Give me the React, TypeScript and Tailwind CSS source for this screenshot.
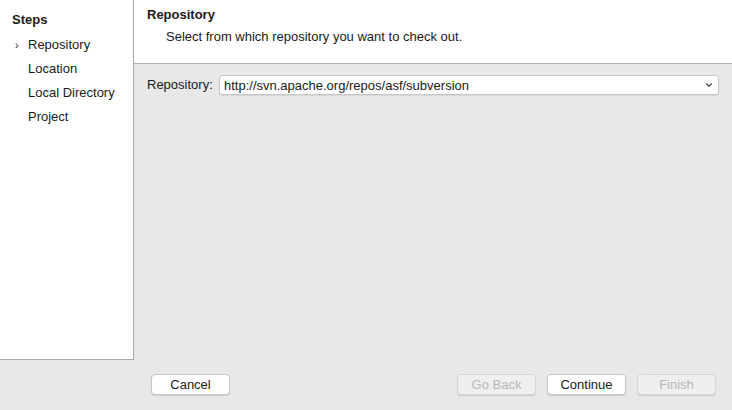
import { ChevronDown } from 'lucide-react';

const steps = ['Repository', 'Location', 'Local Directory', 'Project'];

function Button({ label, disabled }: { label: string; disabled?: boolean }) {
  return (
    <button
      type="button"
      disabled={disabled}
      className={`w-[79px] h-[21px] rounded-[4px] border text-[13px] leading-none shadow-[0_1px_1px_rgba(0,0,0,0.12)] ${
        disabled ? 'bg-[#efefef] border-[#d6d6d6] text-[#b8b8b8]' : 'bg-white border-[#c6c6c6] text-[#1a1a1a]'
      }`}
    >
      {label}
    </button>
  );
}

export default function App() {
  return (
    <div className="w-[732px] h-[410px] bg-[#e8e8e8] flex flex-col overflow-hidden text-[#1a1a1a] font-['Liberation_Sans',Arial,sans-serif] text-[13px]">
      <div className="flex h-[360px]">
        {/* Steps sidebar */}
        <div className="w-[134px] shrink-0 bg-white border-r border-b border-[#a9a9a9] pt-[11px]">
          <div className="pl-[12px] font-bold h-[18px] leading-[18px]">Steps</div>
          <ul className="mt-[4px]">
            {steps.map((s, i) => (
              <li key={s} className="relative h-[24px] leading-[24px] pl-[28px]">
                {i === 0 && <span className="absolute left-[15px] top-0 text-[11px]">›</span>}
                {s}
              </li>
            ))}
          </ul>
        </div>

        {/* Main panel */}
        <div className="flex-1 flex flex-col">
          <div className="h-[64px] bg-white border-b border-[#b4b4b4] pl-[13px] pt-[7px]">
            <div className="font-bold h-[16px] leading-[16px]">Repository</div>
            <div className="pl-[19px] mt-[6px] h-[16px] leading-[16px]">Select from which repository you want to check out.</div>
          </div>
          <div className="flex items-center pl-[13px] pr-[13px] mt-[11px]">
            <span className="w-[72px]">Repository:</span>
            <div className="flex-1 h-[20px] bg-white border border-[#c6c6c6] rounded-[3px] flex items-center pl-[4px] shadow-[0_1px_1px_rgba(0,0,0,0.08)]">
              <span className="flex-1 pt-px">http://svn.apache.org/repos/asf/subversion</span>
              <span className="w-[18px] h-full flex items-center justify-center">
                <ChevronDown size={10} strokeWidth={2.75} className="text-[#444]" />
              </span>
            </div>
          </div>
        </div>
      </div>

      {/* Button bar */}
      <div className="flex items-start h-[50px] pt-[14px] pl-[151px] pr-[16px]">
        <Button label="Cancel" />
        <div className="flex-1" />
        <div className="flex gap-[11px]">
          <Button label="Go Back" disabled />
          <Button label="Continue" />
          <Button label="Finish" disabled />
        </div>
      </div>
    </div>
  );
}
